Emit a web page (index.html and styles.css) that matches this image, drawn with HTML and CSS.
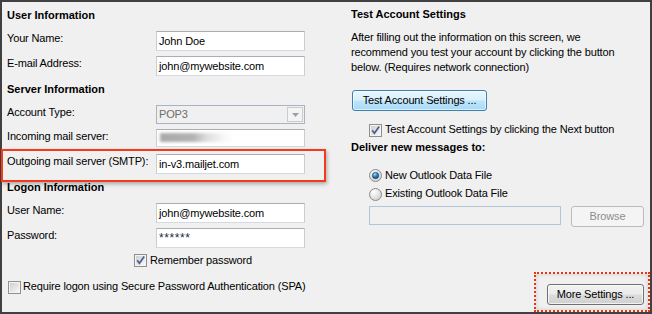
FILE: index.html
```html
<!DOCTYPE html>
<html>
<head>
<meta charset="utf-8">
<link rel="stylesheet" href="styles.css">
</head>
<body>
<div class="dialog">
  <div class="col-left">
    <div class="title title-user">User Information</div>
    <div class="row row-name"><span class="label">Your Name:</span><div class="textbox">John Doe</div></div>
    <div class="row row-gap4"><span class="label">E-mail Address:</span><div class="textbox">john@mywebsite.com</div></div>
    <div class="title title-server">Server Information</div>
    <div class="row row-account"><span class="label">Account Type:</span>
      <div class="select"><span class="select-value">POP3</span><span class="select-btn"><svg width="7" height="4" viewBox="0 0 7 4"><path d="M0 0H7L3.5 4Z" fill="#a0a0a0"/></svg></span></div>
    </div>
    <div class="row row-gap4"><span class="label">Incoming mail server:</span><div class="textbox textbox-short"><span class="blurred"></span></div></div>
    <div class="row row-outgoing highlight"><span class="label">Outgoing mail server (SMTP):</span><div class="textbox">in-v3.mailjet.com</div></div>
    <div class="title title-logon">Logon Information</div>
    <div class="row row-username"><span class="label">User Name:</span><div class="textbox">john@mywebsite.com</div></div>
    <div class="row row-gap4"><span class="label">Password:</span><div class="textbox textbox-pass">******</div></div>
    <div class="check-line remember">
      <svg class="checkbox" width="13" height="13" viewBox="0 0 13 13"><defs><linearGradient id="cb1" x1="0" y1="0" x2="1" y2="1"><stop offset="0" stop-color="#cfcfcf"/><stop offset="1" stop-color="#f7f7f7"/></linearGradient></defs><rect x="0.5" y="0.5" width="12" height="12" fill="#f4f4f4" stroke="#8e8f8f"/><rect x="2" y="2" width="9" height="9" fill="url(#cb1)"/><path d="M3.2 6.2L5.4 9.2L10.2 2.4" fill="none" stroke="#4d5f8e" stroke-width="1.7"/></svg>
      <span>Remember password</span>
    </div>
    <div class="check-line spa">
      <svg class="checkbox" width="13" height="13" viewBox="0 0 13 13"><defs><linearGradient id="cb2" x1="0" y1="0" x2="1" y2="1"><stop offset="0" stop-color="#cfcfcf"/><stop offset="1" stop-color="#f7f7f7"/></linearGradient></defs><rect x="0.5" y="0.5" width="12" height="12" fill="#f4f4f4" stroke="#8e8f8f"/><rect x="2" y="2" width="9" height="9" fill="url(#cb2)"/></svg>
      <span>Require logon using Secure Password Authentication (SPA)</span>
    </div>
  </div>
  <div class="col-right">
    <div class="title title-test">Test Account Settings</div>
    <p class="intro">After filling out the information on this screen, we<br>recommend you test your account by clicking the button<br>below. (Requires network connection)</p>
    <div class="btn btn-test">Test Account Settings ...</div>
    <div class="check-line check-next">
      <svg class="checkbox" width="13" height="13" viewBox="0 0 13 13"><defs><linearGradient id="cb3" x1="0" y1="0" x2="1" y2="1"><stop offset="0" stop-color="#cfcfcf"/><stop offset="1" stop-color="#f7f7f7"/></linearGradient></defs><rect x="0.5" y="0.5" width="12" height="12" fill="#f4f4f4" stroke="#8e8f8f"/><rect x="2" y="2" width="9" height="9" fill="url(#cb3)"/><path d="M3.2 6.2L5.4 9.2L10.2 2.4" fill="none" stroke="#4d5f8e" stroke-width="1.7"/></svg>
      <span>Test Account Settings by clicking the Next button</span>
    </div>
    <div class="title title-deliver">Deliver new messages to:</div>
    <div class="check-line radio-new">
      <svg class="radio" width="13" height="13" viewBox="0 0 13 13"><defs><radialGradient id="rb1" cx="0.35" cy="0.3" r="0.8"><stop offset="0" stop-color="#ffffff"/><stop offset="1" stop-color="#cdcdcd"/></radialGradient><radialGradient id="dot1" cx="0.4" cy="0.3" r="0.7"><stop offset="0" stop-color="#9fdcfa"/><stop offset="0.55" stop-color="#2a82c0"/><stop offset="1" stop-color="#0f4472"/></radialGradient></defs><circle cx="6.5" cy="6.5" r="6" fill="url(#rb1)" stroke="#8a8a8a"/><circle cx="6.5" cy="6.5" r="3.2" fill="url(#dot1)" stroke="#1d4466" stroke-width="0.6"/></svg>
      <span>New Outlook Data File</span>
    </div>
    <div class="check-line radio-existing">
      <svg class="radio" width="13" height="13" viewBox="0 0 13 13"><defs><radialGradient id="rb2" cx="0.35" cy="0.3" r="0.8"><stop offset="0" stop-color="#ffffff"/><stop offset="1" stop-color="#cdcdcd"/></radialGradient></defs><circle cx="6.5" cy="6.5" r="6" fill="url(#rb2)" stroke="#8a8a8a"/></svg>
      <span>Existing Outlook Data File</span>
    </div>
    <div class="file-row">
      <div class="file-input"></div>
      <div class="btn btn-browse">Browse</div>
    </div>
    <div class="more-box">
      <div class="btn btn-more">More Settings ...</div>
    </div>
  </div>
</div>
</body>
</html>
```
FILE: styles.css
```css
* { box-sizing: border-box; }
html, body { margin: 0; padding: 0; }
body {
  width: 652px;
  height: 314px;
  overflow: hidden;
  background: #f0f0f0;
  font-family: "Liberation Sans", Arial, sans-serif;
  font-size: 11px;
  line-height: 15px;
  letter-spacing: -0.15px;
  color: #000;
}
.dialog {
  width: 652px;
  height: 314px;
  border: 2px solid #404040;
  background: #f0f0f0;
  display: flex;
}
.col-left {
  width: 320px;
  padding-left: 5px;
  display: flex;
  flex-direction: column;
}
.col-right {
  flex: 1;
  padding-left: 29px;
  padding-right: 6px;
  display: flex;
  flex-direction: column;
}
.title { font-weight: bold; letter-spacing: 0; padding-top: 1px; height: 16px; white-space: nowrap; }
.title-user { margin-top: 5px; }
.title-server { margin-top: 5px; }
.title-logon { margin-top: 5px; }
.title-test { margin-top: 4px; }
.title-deliver { margin-top: 2px; }

.row { display: flex; align-items: flex-start; white-space: nowrap; }
.row-name { margin-top: 7px; }
.row-gap4 { margin-top: 4px; }
.row-account { margin-top: 7px; }
.row-outgoing { margin-top: 6px; }
.row-username { margin-top: 7px; }
.label { width: 149px; padding-top: 1px; }

.textbox {
  margin-top: 1px;
  width: 149px;
  height: 20px;
  background: #fff;
  border: 1px solid;
  border-color: #abadb3 #c9ced6 #d5dae2 #c9ced6;
  padding: 1px 0 0 2px;
  line-height: 17px;
  white-space: nowrap;
  overflow: hidden;
}
.textbox-short { height: 18px; padding-top: 3px; }
.textbox-pass { color: #1e2a44; font-size: 12px; letter-spacing: 0.6px; line-height: 17px; }
.blurred {
  display: block;
  width: 74px;
  height: 9px;
  margin-left: 1px;
  background: linear-gradient(90deg, #a9a9a9 0%, #b3b3b3 45%, #dcdcdc 62%, #f6f6f6 85%, #fff 100%);
  filter: blur(1.5px);
}

.select {
  margin-top: 1px;
  width: 149px;
  height: 19px;
  border: 1px solid #aab3c0;
  background: #f0f0f0;
  display: flex;
  justify-content: space-between;
  align-items: center;
  padding-left: 2px;
  color: #6d6d6d;
}
.select-btn {
  width: 16px;
  height: 15px;
  margin-right: 1px;
  border: 1px solid #c7ccd3;
  background: #f4f4f4;
  display: flex;
  align-items: center;
  justify-content: center;
}

.highlight { position: relative; }
.highlight::after {
  content: "";
  position: absolute;
  left: -6px;
  top: -4px;
  width: 321px;
  height: 29px;
  border: 2px solid #f5391c;
  box-shadow: 1px 2px 4px rgba(0, 0, 0, 0.3);
}

.check-line { display: flex; align-items: flex-start; white-space: nowrap; }
.check-line span { padding-top: 1px; }
.check-line svg { flex: none; margin-top: 2px; margin-right: 3px; }
.remember { margin-top: 4px; margin-left: 127px; }
.spa { margin-top: 10px; margin-left: 1px; }
.spa svg { margin-top: 3px; margin-right: 2px; }

.intro { margin: 7px 0 0; padding-top: 1px; white-space: nowrap; }

.btn {
  display: flex;
  align-items: center;
  justify-content: center;
  height: 21px;
  border-radius: 3px;
  white-space: nowrap;
}
.btn-test {
  margin-top: 15px;
  width: 135px;
  margin-left: 1px;
  border: 1px solid #3c7fb1;
  background: linear-gradient(#eaf6fd 0%, #d9f0fc 48%, #bee6fd 52%, #a7d9f5 100%);
  box-shadow: inset 0 0 0 1px rgba(255, 255, 255, 0.6);
}
.check-next { margin-top: 10px; margin-left: 18px; }
.check-next svg { margin-top: 3px; }
.radio-new { margin-top: 12px; margin-left: 18px; }
.radio-existing { margin-top: 2px; margin-left: 18px; }
.radio-existing svg { margin-top: 3px; }

.file-row { margin-top: 5px; margin-left: 18px; display: flex; gap: 10px; }
.file-input {
  width: 192px;
  height: 19px;
  border: 1px solid #b5c4d8;
  background: #f0f0f0;
}
.btn-browse {
  width: 73px;
  border: 1px solid #b8bcbf;
  background: #f4f4f4;
  color: #8d8d8d;
}

.more-box {
  margin-top: auto;
  margin-right: -6px;
  align-self: flex-end;
  width: 116px;
  height: 40px;
  border: 2px dotted #f0300f;
  padding: 10px 0 0 11px;
  box-shadow: inset 0 0 4px rgba(0, 0, 0, 0.15);
}
.btn-more {
  width: 97px;
  border: 1px solid #707070;
  background: linear-gradient(#f2f2f2 0%, #ebebeb 48%, #dddddd 52%, #cfcfcf 100%);
  box-shadow: inset 0 0 0 1px rgba(255, 255, 255, 0.7);
}
```
